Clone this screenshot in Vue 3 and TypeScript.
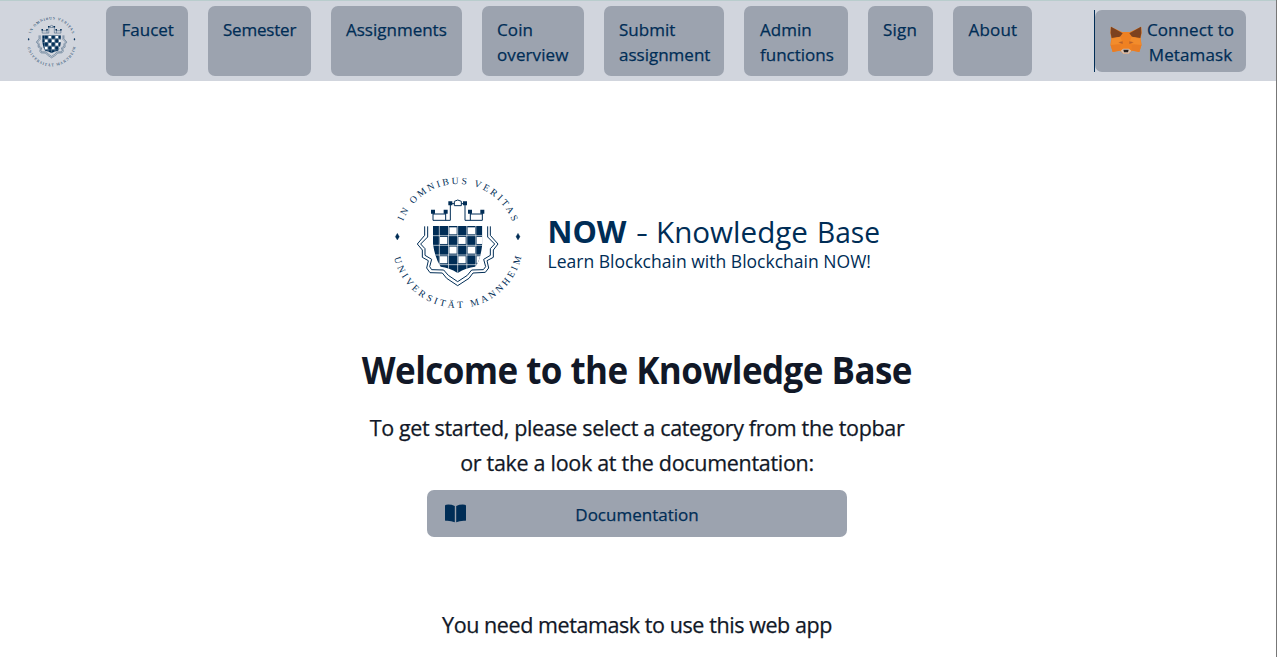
<script setup lang="ts">
import { h } from 'vue'

interface NavItem { label: string; cls: string }

const items: NavItem[] = [
  { label: 'Faucet', cls: 'faucet' },
  { label: 'Semester', cls: 'semester' },
  { label: 'Assignments', cls: 'assignments' },
  { label: 'Coin overview', cls: 'coin' },
  { label: 'Submit assignment', cls: 'submit' },
  { label: 'Admin functions', cls: 'admin' },
  { label: 'Sign', cls: 'sign' },
  { label: 'About', cls: 'about' },
]

const navy = '#002d56'

// White squares of the chequered shield, alternating row by row.
const tiles: { x: number; y: number }[] = []
for (let row = 0; row < 4; row++) {
  const columns = row % 2 === 0 ? [193, 248] : [165, 220, 275]
  for (const x of columns) tiles.push({ x, y: 172 + row * 28.9 })
}

// University crest; `uid` keeps the ids of each drawn instance apart.
const Crest = (props: { uid: string }) => {
  const ring = (name: string, startOffset: string, textLength: string, label: string) =>
    h('text', [h('textPath', { href: `#${props.uid}-${name}`, startOffset, textLength, lengthAdjust: 'spacing' }, label)])
  return h('svg', { viewBox: '0 0 435 435' }, [
    h('defs', [
      h('clipPath', { id: `${props.uid}-shield` }, [
        h('path', { d: 'M144 168H292V222Q286 275 270 290Q244 292 218 309Q192 292 167 290Q150 265 144 222Z' }),
      ]),
      h('path', { id: `${props.uid}-top`, d: 'M42 218A176 176 0 0 1 394 218' }),
      h('path', { id: `${props.uid}-bottom`, d: 'M22 218A196 196 0 0 0 414 218' }),
    ]),
    h('g', { fill: navy, 'font-family': "'Liberation Serif', serif", 'font-size': '29' }, [
      ring('top', '66', '422', 'IN OMNIBUS VERITAS'),
      ring('bottom', '46', '526', 'UNIVERSITÄT MANNHEIM'),
    ]),
    h('path', { d: 'M37 190l6 10-6 10-6-10zM399 190l6 10-6 10-6-10z', fill: navy, stroke: navy }),
    h('g', { fill: 'none', stroke: navy, 'stroke-width': '3' }, [
      h('path', { d: 'M144 125V151H196V101H208M182 125V151M144 132H182M240 151V101H229M240 151H292V125M256 125V151M256 132H292M208 107V94Q218 86 229 94V107Z' }),
      h('path', { d: 'M119 169V196L97 222L112 240V262L130 272L125 294L135 308L172 309L185 325L218 347L252 325L264 309L301 307L311 294L306 272L325 262V240L339 222L316 196V169' }),
      h('path', { d: 'M128 169V201L107 222L120 236V256L140 268L134 290L140 299L176 300L190 316L218 335L247 316L260 300L295 299L302 290L296 268L316 256V236L329 222L308 201V169' }),
    ]),
    h('path', { d: 'M138 119h12v12h-12zM176 119h12v12h-12zM190 94h12v12h-12zM234 94h12v12h-12zM249 119h12v12h-12zM286 119h12v12h-12z', fill: navy }),
    h('g', { 'clip-path': `url(#${props.uid}-shield)` }, [
      h('path', { d: 'M140 166H296V312H140Z', fill: navy }),
      h('path', { d: 'M163 166V312M190.5 166V312M218 166V312M245.5 166V312M272.5 166V312M140 197H296M140 226H296M140 255H296M140 284H296', stroke: '#fff', 'stroke-width': '2.4', 'stroke-opacity': '.8' }),
      ...tiles.map((t) => h('rect', { x: t.x, y: t.y, width: 22, height: 21, fill: '#fff' })),
    ]),
  ])
}
Crest.props = ['uid']
</script>

<template>
  <div class="page">
    <header class="bar">
      <Crest class="small-logo" uid="small" />
      <nav class="nav">
        <a v-for="i in items" :key="i.cls" class="item" :class="i.cls">{{ i.label }}</a>
      </nav>
      <div class="wallet">
        <button class="connect" type="button">
          <svg class="fox" width="32" height="28" viewBox="0 0 96 84">
            <path d="M2 2L36 18H60L94 2L95 20L92 38L95 56L88 78L66 74L56 83H40L30 74L8 78L1 56L4 38L1 20Z" fill="#ef8122" />
            <path d="M3 2L38 22L30 32L5 36Q0 20 3 2ZM93 2L58 22L66 32L91 36Q96 20 93 2Z" fill="#7d421f" />
            <path d="M5 38L31 32L37 48L28 53L3 57ZM91 38L65 32L59 48L68 53L93 57Z" fill="#f28c2c" />
            <path d="M25 49L38 46L38 54ZM71 49L58 46L58 54Z" fill="#b8622a" />
            <path d="M2 57H30L31 73L8 78ZM94 57H66L65 73L88 78Z" fill="#e97d24" />
            <path d="M32 74L40 68H56L64 74L56 83H40Z" fill="#d7c1b3" />
            <path d="M40 71H56L54 79H42Z" fill="#242020" />
          </svg>
          <span class="connect-label">Connect to<br />Metamask</span>
        </button>
      </div>
    </header>

    <main class="main">
      <div class="brand">
        <Crest class="crest" uid="large" />
        <svg class="wordmark" width="360" height="145" viewBox="0 0 360 145">
          <g fill="#002d56" font-family="'Open Sans', sans-serif" font-size="29.5">
            <text x="17.500" y="73" font-size="30" font-weight="700" textLength="79" lengthAdjust="spacingAndGlyphs">NOW</text>
            <text x="106" y="73" textLength="12" lengthAdjust="spacingAndGlyphs">-</text>
            <text x="126" y="73" textLength="152" lengthAdjust="spacingAndGlyphs">Knowledge</text>
            <text x="287" y="73" textLength="63" lengthAdjust="spacingAndGlyphs">Base</text>
            <text x="17.500" y="97.600" font-size="18" textLength="323.500" lengthAdjust="spacingAndGlyphs">Learn Blockchain with Blockchain NOW!</text>
          </g>
        </svg>
      </div>
      <h1 class="title">Welcome to the Knowledge Base</h1>
      <p class="lead"><span class="l1">To get started, please select a category from the topbar</span><br /><span class="l2">or take a look at the documentation:</span></p>
      <a class="docs">
        <svg class="book" width="21" height="19" viewBox="0 0 21 19">
          <path d="M0 2Q0 .8 1.2 .7Q6 .2 9.8 2V18.3Q5.8 16.5 1 16.8Q0 16.9 0 15.9ZM21 2Q21 .8 19.8 .7Q15 .2 11.2 2V18.3Q15.2 16.5 20 16.8Q21 16.9 21 15.9Z" fill="#002d56" />
        </svg>
        <span>Documentation</span>
      </a>
      <p class="notice">You need metamask to use this web app</p>
    </main>
  </div>
</template>

<style>
html, body { margin: 0; background: #fff; overflow: hidden; }
</style>

<style scoped>
.page {
  box-sizing: border-box;
  height: 657px;
  border-right: 1px solid #777;
  font-family: 'Open Sans', 'Noto Sans', sans-serif;
  color: #111827;
  overflow: hidden;
}
.bar {
  box-sizing: border-box;
  display: flex;
  align-items: flex-start;
  height: 81px;
  border-top: 1px solid #b9cdcd;
  background: #d1d5dd;
}
.small-logo { flex: none; width: 55px; height: 55px; margin: 13px 0 0 24px; }
.nav { display: flex; gap: 20px; margin: 5px 0 0 27px; }
.item {
  box-sizing: border-box;
  height: 70px;
  padding: 11px 0 0 15px;
  border-radius: 7px;
  background: #9ca3af;
  color: #002d56;
  font-size: 17px;
  line-height: 25px;
  -webkit-text-stroke: .25px #002d56;
}
.faucet { width: 82px; padding-left: 15.500px; }
.semester { width: 103px; letter-spacing: -.2px; }
.assignments { width: 131px; }
.coin { width: 102px; padding-right: 10px; letter-spacing: .1px; }
.submit { width: 120px; padding-right: 10px; }
.admin { width: 104px; padding-left: 16px; padding-right: 10px; }
.sign { width: 65px; letter-spacing: .2px; }
.about { width: 79px; padding-left: 15.500px; letter-spacing: .2px; }
.wallet { margin: 9px 0 0 62px; border-left: 1px solid #002d56; }
.connect {
  display: flex;
  align-items: center;
  box-sizing: border-box;
  width: 151px;
  height: 62px;
  padding: 1px 0 0 15px;
  border: 0;
  border-radius: 7px;
  background: #9ca3af;
  color: #002d56;
  font: 17px/25px 'Open Sans', 'Noto Sans', sans-serif;
  letter-spacing: .1px;
  -webkit-text-stroke: .25px #002d56;
}
.fox { flex: none; margin-top: -3px; }
.connect-label { width: 97px; text-align: center; white-space: nowrap; }
.main { display: flex; flex-direction: column; align-items: center; width: 1274px; }
.brand { display: flex; align-self: flex-start; margin: 89px 0 0 385px; }
.crest { width: 145px; height: 145px; }
.title {
  margin: 30px 0 0;
  font-size: 37.5px;
  line-height: 50px;
  font-weight: 700;
  letter-spacing: -.6px;
  white-space: nowrap;
  transform: scaleX(.933);
}
.lead, .notice {
  margin: 0;
  font-size: 21.5px;
  line-height: 35px;
  text-align: center;
  white-space: nowrap;
  -webkit-text-stroke: .25px #111827;
}
.lead { margin-top: 15px; }
.l1 { letter-spacing: -.34px; }
.l2 { letter-spacing: -.3px; }
.docs {
  display: flex;
  align-items: center;
  box-sizing: border-box;
  width: 420px;
  height: 47px;
  margin-top: 10px;
  padding: 1px 18px 0;
  border-radius: 7px;
  background: #9ca3af;
  color: #002d56;
  font-size: 17px;
  line-height: 25px;
  -webkit-text-stroke: .25px #002d56;
}
.book { margin-top: -1px; }
.docs span { flex: 1; margin-right: 21px; text-align: center; }
.notice { margin-top: 70px; letter-spacing: -.42px; }
</style>
